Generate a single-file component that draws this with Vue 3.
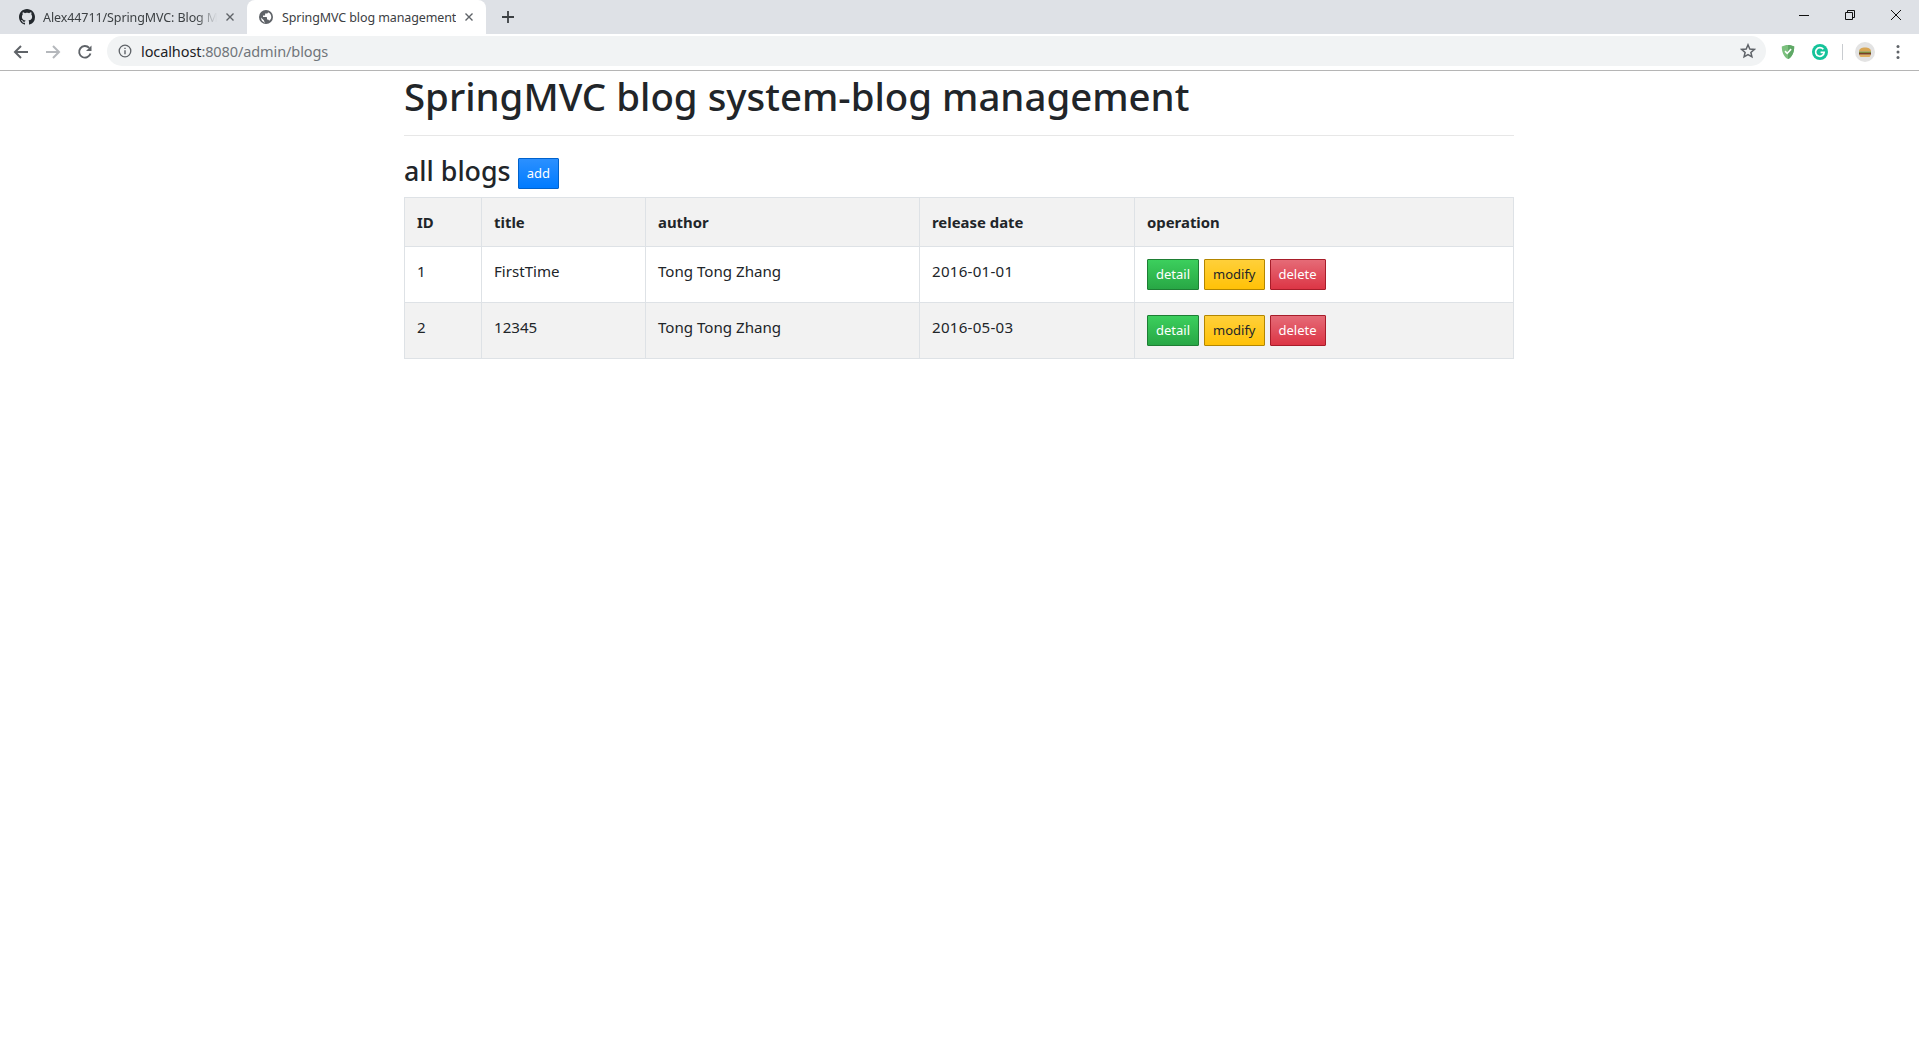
<script setup>
const blogs = [
  { id: 1, title: 'FirstTime', author: 'Tong Tong Zhang', date: '2016-01-01' },
  { id: 2, title: '12345', author: 'Tong Tong Zhang', date: '2016-05-03' },
]
</script>

<template>
  <div class="browser">
    <div class="tabstrip">
      <div class="tab">
        <svg class="favicon" viewBox="0 0 16 16"><path fill="#24292e" d="M8 0C3.58 0 0 3.58 0 8c0 3.54 2.29 6.53 5.47 7.59.4.07.55-.17.55-.38 0-.19-.01-.82-.01-1.49-2.01.37-2.53-.49-2.69-.94-.09-.23-.48-.94-.82-1.13-.28-.15-.68-.52-.01-.53.63-.01 1.08.58 1.23.82.72 1.21 1.87.87 2.33.66.07-.52.28-.87.51-1.07-1.78-.2-3.64-.89-3.64-3.95 0-.87.31-1.59.82-2.15-.08-.2-.36-1.02.08-2.12 0 0 .67-.21 2.2.82.64-.18 1.32-.27 2-.27s1.36.09 2 .27c1.53-1.04 2.2-.82 2.2-.82.44 1.1.16 1.92.08 2.12.51.56.82 1.27.82 2.15 0 3.07-1.87 3.75-3.65 3.95.29.25.54.73.54 1.48 0 1.07-.01 1.93-.01 2.2 0 .21.15.46.55.38A8.01 8.01 0 0 0 16 8c0-4.42-3.58-8-8-8z"/></svg>
        <span class="tab-title faded">Alex44711/SpringMVC: Blog M</span>
        <svg class="close" viewBox="0 0 10 10"><path d="M1.5 1.5l7 7M8.5 1.5l-7 7" stroke="#5f6368" stroke-width="1.4" fill="none"/></svg>
      </div>
      <div class="tab active">
        <svg class="favicon" viewBox="0 0 16 16"><circle cx="8" cy="8" r="7" fill="#5f6368"/><path fill="#fff" d="M7.2 13.6c-1-.1-2.9-1-3.7-2.6l-.5-2.6 3 3v.8l1.2 1.4zM11 11.5c-.2-.6-.7-1-1.3-1h-.7V8.7c0-.4-.3-.7-.7-.7H5V6.6h1.4c.4 0 .7-.3.7-.7V4.500h1.500c.8 0 1.400-.6 1.400-1.300 2 .8 3.300 2.500 3.300 4.800 0 1.400-.700 2.800-1.800 3.500z"/></svg>
        <span class="tab-title">SpringMVC blog management</span>
        <svg class="close" viewBox="0 0 10 10"><path d="M1.5 1.500l7 7M8.500 1.500l-7 7" stroke="#5f6368" stroke-width="1.4" fill="none"/></svg>
      </div>
      <svg class="newtab" viewBox="0 0 12 12"><path d="M6 0v12M0 6h12" stroke="#3c4043" stroke-width="1.800" fill="none"/></svg>
      <div class="win-controls">
        <svg viewBox="0 0 12 12"><path d="M1 6.500h10" stroke="#111" fill="none"/></svg>
        <svg viewBox="0 0 12 12"><path d="M1.500 3.500h7v7h-7zM3.500 3.500v-2h7v7h-2" stroke="#111" fill="none"/></svg>
        <svg viewBox="0 0 12 12"><path d="M1 1l10 10M11 1L1 11" stroke="#111" fill="none"/></svg>
      </div>
    </div>
    <div class="toolbar">
      <svg class="nav" viewBox="0 0 16 16"><path d="M15 8H2M8 2L2 8l6 6" stroke="#5f6368" stroke-width="2" fill="none"/></svg>
      <svg class="nav" viewBox="0 0 16 16"><path d="M1 8h13M8 2l6 6-6 6" stroke="#b5b8bc" stroke-width="2" fill="none"/></svg>
      <svg class="nav" viewBox="0 0 16 16"><path d="M13.500 9.500A5.800 5.800 0 1 1 12.200 3.900" stroke="#5f6368" stroke-width="1.900" fill="none"/><path d="M14.500 1.500v5.500H9z" fill="#5f6368"/></svg>
      <div class="omnibox">
        <svg class="info" viewBox="0 0 14 14"><circle cx="7" cy="7" r="5.800" stroke="#5f6368" stroke-width="1.300" fill="none"/><path d="M7 6.200v4M7 3.700v1.300" stroke="#5f6368" stroke-width="1.400"/></svg>
        <span class="url"><span class="host">localhost</span>:8080/admin/blogs</span>
        <svg class="star" viewBox="0 0 16 16"><path d="M8 1.800l1.800 4.200 4.500.4-3.400 3 1 4.400L8 11.500l-3.900 2.300 1-4.400-3.400-3 4.500-.4z" stroke="#5f6368" stroke-width="1.500" fill="none"/></svg>
      </div>
      <div class="extensions">
        <svg class="ext" viewBox="0 0 16 18"><path d="M8 1c2.500 0 5 .7 7 1.800C15 9 13 14.500 8 17 3 14.500 1 9 1 2.800 3 1.700 5.500 1 8 1z" fill="#7cc07e"/><path d="M8 1c2.500 0 5 .7 7 1.800C15 9 13 14.500 8 17z" fill="#5fa866"/><path d="M4.700 8l2.400 2.600 4.400-4.800" stroke="#fff" stroke-width="1.800" fill="none"/></svg>
        <svg class="ext" viewBox="0 0 16 16"><circle cx="8" cy="8" r="8" fill="#15c39a"/><path d="M11.300 5.300A4.300 4.300 0 1 0 12.200 8.300H8.600" stroke="#fff" stroke-width="1.700" fill="none"/></svg>
        <span class="sep"></span>
        <svg class="avatar" viewBox="0 0 20 20"><circle cx="10" cy="10" r="10" fill="#e3e3e3"/><path d="M4 9.500C4 6.800 6.500 5.500 10 5.500s6 1.300 6 4z" fill="#d8a654"/><rect x="4" y="9.500" width="12" height="1.600" fill="#7a8a3a"/><rect x="4" y="11" width="12" height="1.700" fill="#7a3f24"/><path d="M4.300 12.700h11.400c0 1.500-1 2.300-2.300 2.300H6.600c-1.300 0-2.300-.8-2.300-2.300z" fill="#e0b060"/></svg>
        <svg class="menu" viewBox="0 0 4 16"><circle cx="2" cy="2.500" r="1.500" fill="#5f6368"/><circle cx="2" cy="8" r="1.500" fill="#5f6368"/><circle cx="2" cy="13.500" r="1.500" fill="#5f6368"/></svg>
      </div>
    </div>

    <main class="page">
      <h1 class="page-title">SpringMVC blog system-blog management</h1>
      <hr class="rule" />
      <div class="heading">
        <h3>all blogs</h3>
        <a class="btn blue">add</a>
      </div>
      <table>
        <thead>
          <tr>
            <th class="c1">ID</th>
            <th class="c2">title</th>
            <th class="c3">author</th>
            <th class="c4">release date</th>
            <th>operation</th>
          </tr>
        </thead>
        <tbody>
          <tr v-for="b in blogs" :key="b.id">
            <td>{{ b.id }}</td>
            <td>{{ b.title }}</td>
            <td>{{ b.author }}</td>
            <td class="date">{{ b.date }}</td>
            <td class="ops">
              <a class="btn green">detail</a>
              <a class="btn yellow">modify</a>
              <a class="btn red">delete</a>
            </td>
          </tr>
        </tbody>
      </table>
    </main>
  </div>
</template>

<style>
html, body { margin: 0; background: #fff; }
</style>

<style scoped>
.browser {
  min-height: 100vh;
  background: #fff;
  font-family: "Noto Sans", "Open Sans", sans-serif;
  color: #212529;
  overflow: hidden;
}
.tabstrip {
  height: 34px;
  background: #dee1e6;
  display: flex;
  align-items: flex-end;
  padding-left: 8px;
}
.tab {
  width: 239px;
  height: 34px;
  box-sizing: border-box;
  padding: 0 12px 0 11px;
  display: flex;
  align-items: center;
  gap: 8px;
  font-size: 12.5px;
  color: #3c4043;
}
.tab.active {
  background: #fff;
  border-radius: 8px 8px 0 0;
  color: #3c4043;
}
.favicon { width: 16px; height: 16px; flex: none; }
.tab-title {
  flex: 1;
  white-space: nowrap;
  overflow: hidden;
  letter-spacing: -.1px;
}
.tab-title.faded {
  -webkit-mask-image: linear-gradient(90deg, #000 88%, transparent);
  mask-image: linear-gradient(90deg, #000 88%, transparent);
}
.close { width: 10px; height: 10px; flex: none; }
.newtab { width: 12px; height: 12px; margin: 0 0 11px 16px; }
.win-controls {
  margin-left: auto;
  align-self: flex-start;
  display: flex;
  gap: 34px;
  padding: 9px 17px 0 0;
}
.win-controls svg { width: 12px; height: 12px; }
.toolbar {
  height: 36px;
  box-sizing: content-box;
  border-bottom: 1px solid #b5b5b5;
  display: flex;
  align-items: center;
  padding-left: 13px;
  gap: 16px;
}
.nav { width: 16px; height: 16px; flex: none; }
.omnibox {
  flex: none;
  width: 1659px;
  height: 30px;
  margin: -2px 0 0 -2px;
  border-radius: 15px;
  background: #f1f3f4;
  display: flex;
  align-items: center;
  padding: 0 10px 0 11px;
  box-sizing: border-box;
}
.info { width: 14px; height: 14px; flex: none; }
.url { margin-left: 9px; font-size: 14.5px; color: #70757a; letter-spacing: -.1px; }
.host { color: #202124; }
.star { width: 16px; height: 16px; margin-left: auto; }
.extensions { display: flex; align-items: center; margin: -1px 0 0 -2px; }
.ext { width: 16px; height: 16px; margin-right: 16px; }
.sep { width: 1px; height: 16px; background: #c9ccd0; margin: 0 12px 0 -2px; }
.avatar { width: 20px; height: 20px; }
.menu { width: 4px; height: 16px; margin-left: 21px; }

.page { width: 1110px; margin: 0 0 0 404px; }
.page-title {
  margin: 0;
  padding-top: 1px;
  font-size: 38.4px;
  line-height: 48px;
  font-weight: 500;
}
.rule { border: 0; border-top: 1px solid #e7e7e7; margin: 15px 0 16px; }
.heading { display: flex; align-items: center; gap: 7px; height: 40px; margin-bottom: 5px; }
.heading h3 { margin: -3px 0 0; font-size: 26.8px; line-height: 34px; font-weight: 500; }
.heading .btn { margin-top: 3px; }
.btn {
  display: inline-block;
  box-sizing: border-box;
  height: 31px;
  padding: 0 8px;
  line-height: 29px;
  font-size: 13px;
  border: 1px solid;
  border-radius: 1px;
  vertical-align: middle;
}
.blue { background: linear-gradient(#2b90ff, #007bff); border-color: #0062cc; color: #fff; }
.green { background: linear-gradient(#3ccf5d, #28a745); border-color: #1e7e34; color: #fff; }
.yellow { background: linear-gradient(#ffd03a, #ffc107); border-color: #b38600; color: #212529; }
.red { background: linear-gradient(#e56b77, #dc3545); border-color: #a71d2a; color: #fff; }
table {
  width: 100%;
  border-collapse: collapse;
  font-size: 15.1px;
  line-height: 24px;
  table-layout: fixed;
}
th, td {
  box-sizing: border-box;
  border: 1px solid #dee2e6;
  padding: 12px;
  text-align: left;
  vertical-align: top;
  font-weight: 400;
}
th { font-weight: 700; font-size: 14.9px; }
thead tr, tbody tr:nth-child(even) { background: #f2f2f2; }
.c1 { width: 77px; }
.c2 { width: 164px; }
.c3 { width: 274px; }
.c4 { width: 215px; }
.date { letter-spacing: .25px; }
.ops .btn + .btn { margin-left: 5px; }
</style>
